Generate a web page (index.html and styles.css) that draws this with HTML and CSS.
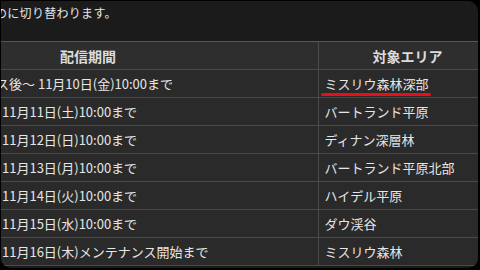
FILE: index.html
```html
<!DOCTYPE html>
<html lang="ja">
<head>
<meta charset="utf-8">
<link rel="stylesheet" href="styles.css">
</head>
<body>
<div class="frame">
  <p class="notice"><span class="lead">の</span>に切り替わります。</p>
  <table class="schedule">
    <colgroup><col class="col-period"><col class="col-area"></colgroup>
    <thead>
      <tr><th class="h-period">配信期間</th><th class="h-area">対象エリア</th></tr>
    </thead>
    <tbody>
      <tr><td><span class="lead">ス</span>後～ 11月10日(金)10:00まで</td><td><span class="marked">ミスリウ森林深部</span></td></tr>
      <tr><td>11月11日(土)10:00まで</td><td>バートランド平原</td></tr>
      <tr><td>11月12日(日)10:00まで</td><td>ディナン深層林</td></tr>
      <tr><td>11月13日(月)10:00まで</td><td>バートランド平原北部</td></tr>
      <tr><td>11月14日(火)10:00まで</td><td>ハイデル平原</td></tr>
      <tr><td>11月15日(水)10:00まで</td><td>ダウ渓谷</td></tr>
      <tr><td>11月16日(木)メンテナンス開始まで</td><td>ミスリウ森林</td></tr>
    </tbody>
  </table>
</div>
</body>
</html>
```
FILE: styles.css
```css
html, body {
  margin: 0;
  padding: 0;
  background: #000;
  width: 480px;
  height: 270px;
  overflow: hidden;
}
.frame {
  margin: 1px 2px 0 1px;
  height: 267px;
  background: #1b1b1b;
  border-radius: 0 10px 10px 10px;
  overflow: hidden;
  font-family: "Noto Sans CJK JP", "Noto Sans", sans-serif;
  color: #e6e6e6;
}
.notice {
  margin: 0;
  height: 40px;
  padding: 3px 0 0 0;
  box-sizing: border-box;
  font-size: 12px;
  line-height: 18px;
  white-space: nowrap;
  letter-spacing: 0.3px;
}
.lead {
  margin-left: -6px;
}
.schedule {
  border-collapse: collapse;
  table-layout: fixed;
  width: 520px;
  background: #2a2a2a;
  font-size: 13px;
}
.col-period { width: 317px; }
.col-area { width: 203px; }
.schedule th,
.schedule td {
  height: 28px;
  padding: 0;
  box-sizing: border-box;
  border-top: 1px solid #4a4a4a;
  border-bottom: 1px solid #4a4a4a;
  text-align: left;
  white-space: nowrap;
  vertical-align: middle;
}
.schedule th {
  background: #2e2e2e;
  font-size: 14px;
  font-weight: bold;
  color: #dcdcdc;
  border-top-color: #555;
}
.schedule td + td,
.schedule th + th {
  border-left: 1px solid #4a4a4a;
  padding-left: 6px;
}
.h-period { padding-left: 59px !important; }
.schedule th.h-area { padding-left: 54px; }
.schedule td:first-child { padding-left: 1px; }
.marked {
  position: relative;
}
.marked::after {
  content: "";
  position: absolute;
  left: -4px;
  right: -2px;
  bottom: -3px;
  height: 3px;
  border-radius: 2px;
  background: #e4101c;
}
```
